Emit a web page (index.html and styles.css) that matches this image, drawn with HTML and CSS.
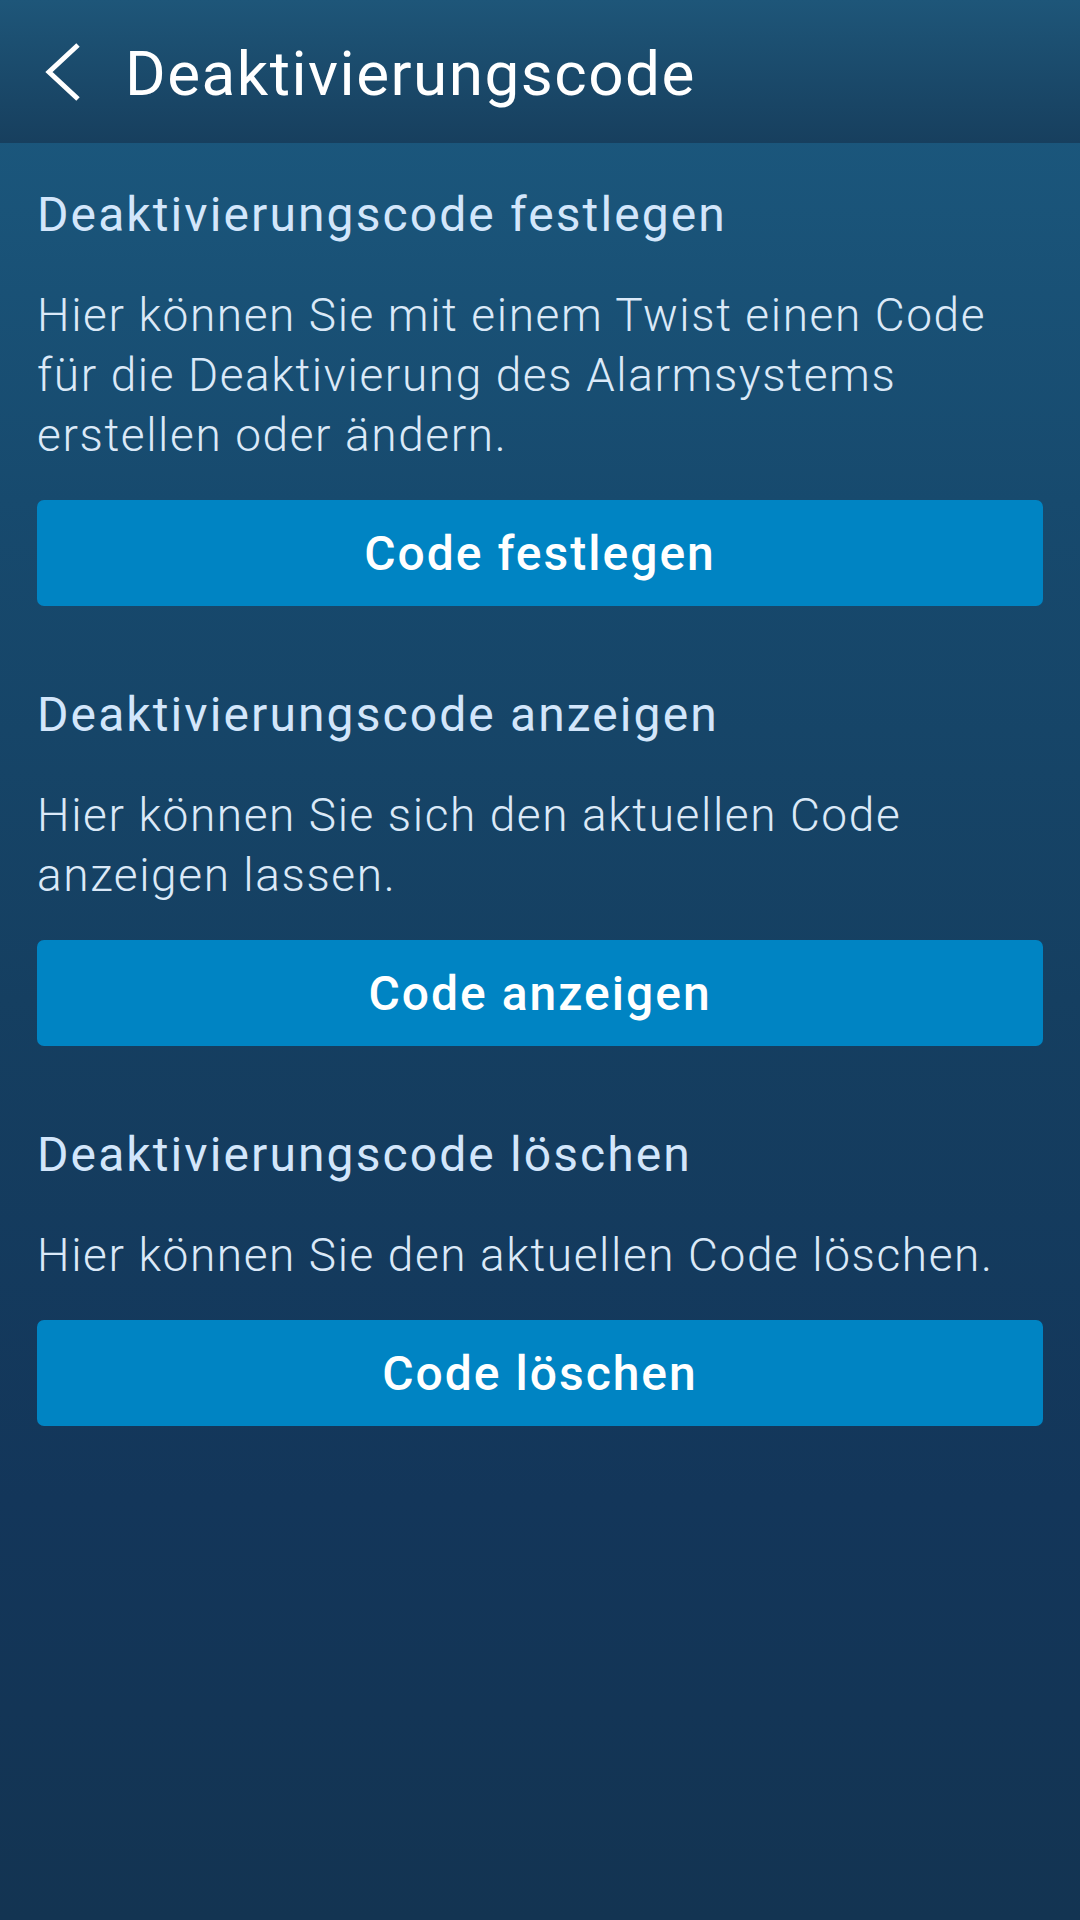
FILE: index.html
```html
<!DOCTYPE html>
<html lang="de">
<head>
<meta charset="utf-8">
<title>Deaktivierungscode</title>
<link rel="stylesheet" href="styles.css">
</head>
<body>
<div class="screen">
  <header class="topbar">
    <svg class="back" width="40" height="60" viewBox="0 0 40 60" aria-hidden="true">
      <polyline points="33,2 4,29 33,56" fill="none" stroke="#ffffff" stroke-width="5" stroke-linecap="butt" stroke-linejoin="miter"/>
    </svg>
    <h1 class="title">Deaktivierungscode</h1>
  </header>
  <main class="content">
    <section class="block">
      <h2 class="heading">Deaktivierungscode festlegen</h2>
      <p class="text">Hier können Sie mit einem Twist einen Code für die Deaktivierung des Alarmsystems erstellen oder ändern.</p>
      <button class="btn">Code festlegen</button>
    </section>
    <section class="block">
      <h2 class="heading">Deaktivierungscode anzeigen</h2>
      <p class="text">Hier können Sie sich den aktuellen Code anzeigen lassen.</p>
      <button class="btn">Code anzeigen</button>
    </section>
    <section class="block">
      <h2 class="heading">Deaktivierungscode löschen</h2>
      <p class="text">Hier können Sie den aktuellen Code löschen.</p>
      <button class="btn">Code löschen</button>
    </section>
  </main>
</div>
</body>
</html>
```
FILE: styles.css
```css
* { box-sizing: border-box; }
html, body { margin: 0; padding: 0; }
body {
  width: 1080px;
  height: 1920px;
  font-family: Roboto, "Noto Sans", sans-serif;
  background: #13354f;
  overflow: hidden;
}
.screen {
  height: 1920px;
  display: flex;
  flex-direction: column;
  background: linear-gradient(180deg, #1c5b81 0px, #174a6e 500px, #153f61 1000px, #13365a 1500px, #133452 1920px);
}
.topbar {
  height: 143px;
  flex: none;
  display: flex;
  align-items: center;
  padding-left: 45px;
  background: linear-gradient(180deg, #1e5679 0%, #173f5e 100%);
}
.back {
  display: block;
  margin-right: 40px;
  margin-top: 2px;
}
.title {
  margin: 0;
  font-size: 62px;
  font-weight: 400;
  color: #ffffff;
  letter-spacing: 1.5px;
  line-height: 1;
  margin-top: 4px;
}
.content {
  padding: 42px 37px 0 37px;
  display: flex;
  flex-direction: column;
  gap: 79px;
}
.block {
  display: flex;
  flex-direction: column;
}
.heading {
  margin: 0 0 40px 0;
  font-size: 48px;
  line-height: 60px;
  font-weight: 400;
  color: #d3e6fb;
  letter-spacing: 2.1px;
}
.text {
  margin: 0 0 35px 0;
  font-size: 46px;
  line-height: 60px;
  font-weight: 300;
  color: #dbe9f8;
  letter-spacing: 1.6px;
}
.btn {
  height: 106px;
  width: 100%;
  border: none;
  border-radius: 7px;
  background: #0084c3;
  color: #ffffff;
  font-family: Roboto, "Noto Sans", sans-serif;
  font-size: 48px;
  font-weight: 500;
  letter-spacing: 2px;
  padding: 0;
}
```
